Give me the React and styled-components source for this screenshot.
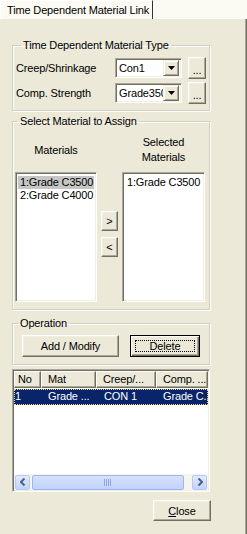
import React from 'react';
import styled, { createGlobalStyle } from 'styled-components';

const GlobalStyle = createGlobalStyle`
  html, body {
    margin: 0;
    padding: 0;
    background: #ece9d8;
  }
  body {
    font-family: "Liberation Sans", Arial, sans-serif;
    font-size: 11px;
    letter-spacing: -0.15px;
    color: #000;
  }
`;

const Window = styled.div`
  width: 247px;
  height: 534px;
  display: flex;
  flex-direction: column;
  overflow: hidden;
`;

const TabStrip = styled.div`
  display: flex;
  height: 19px;
  background: #fbfaf3;
`;

const Tab = styled.div`
  width: 153px;
  box-sizing: border-box;
  padding: 3px 0 0 6px;
  border-left: 1px solid #fff;
  border-top: 1px solid #fff;
  border-right: 1px solid #333;
  line-height: 13px;
  white-space: nowrap;
`;

const TabFiller = styled.div`
  flex: 1;
  border-bottom: 1px solid #fff;
`;

const Panel = styled.div`
  flex: 1;
  display: flex;
  flex-direction: column;
  padding: 0 0 0 12px;
  background: #ece9d8;
  box-shadow: inset -1px 0 #716f64, inset -2px 0 #aca899;
`;

const Group = styled.fieldset`
  width: 198px;
  box-sizing: border-box;
  margin: ${p => p.$top}px 0 0 0;
  padding: ${p => p.$pad};
  border: 1px solid #d0d0bf;
  box-shadow: inset 1px 1px #fff, 1px 1px #fff;
  min-inline-size: 0;
`;

const Legend = styled.legend`
  margin-left: 5px;
  padding: 0 2px;
  line-height: 13px;
`;

const FieldRow = styled.div`
  display: flex;
  align-items: center;
  height: 22px;
  & + & {
    margin-top: 3px;
  }
`;

const FieldLabel = styled.span`
  width: 99px;
`;

const Combo = styled.div`
  width: 67px;
  height: 20px;
  box-sizing: border-box;
  display: flex;
  align-items: center;
  background: #fff;
  border: 1px solid;
  border-color: #aca899 #fff #fff #aca899;
  box-shadow: inset 1px 1px #716f64, inset -1px -1px #f1efe2;
  padding: 2px 2px 2px 3px;
`;

const ComboText = styled.span`
  flex: 1;
  overflow: hidden;
  white-space: nowrap;
  line-height: 14px;
`;

const DropButton = styled.div`
  width: 16px;
  height: 16px;
  flex: none;
  box-sizing: border-box;
  display: flex;
  align-items: center;
  justify-content: center;
  background: #ece9d8;
  border: 1px solid;
  border-color: #f1efe2 #716f64 #716f64 #f1efe2;
  box-shadow: inset 1px 1px #fff, inset -1px -1px #aca899;
`;

const Raised = styled.button`
  font: inherit;
  letter-spacing: inherit;
  color: #000;
  padding: 0;
  background: #ece9d8;
  border: 1px solid;
  border-color: #fff #716f64 #716f64 #fff;
  box-shadow: inset -1px -1px #aca899, inset 1px 1px #f1efe2;
  width: ${p => p.$w}px;
  height: ${p => p.$h}px;
  display: flex;
  align-items: center;
  justify-content: center;
`;

const DotsButton = styled(Raised)`
  margin-left: 6px;
  align-items: flex-end;
  padding-bottom: 4px;
  line-height: 8px;
`;

const DefaultButton = styled(Raised)`
  border: 1px solid #000;
  box-shadow: inset 1px 1px #fff, inset -1px -1px #716f64, inset -2px -2px #aca899;
  margin-left: 11px;
`;

const FocusRect = styled.span`
  display: flex;
  align-items: center;
  justify-content: center;
  width: calc(100% - 8px);
  height: calc(100% - 8px);
  border: 1px dotted #000;
  box-sizing: border-box;
`;

const AssignGrid = styled.div`
  display: grid;
  grid-template-columns: 82px 25px 83px;
  grid-template-rows: 44px 130px;
  padding-left: 2px;
`;

const ColHeader = styled.div`
  display: flex;
  align-items: center;
  justify-content: center;
  text-align: center;
  line-height: 15px;
`;

const ListBox = styled.div`
  box-sizing: border-box;
  background: #fff;
  border: 1px solid;
  border-color: #aca899 #fff #fff #aca899;
  box-shadow: inset 1px 1px #716f64, inset -1px -1px #f1efe2;
  padding: 3px 2px;
`;

const ListItem = styled.div`
  line-height: 13px;
  padding-left: 2px;
  white-space: nowrap;
  background: ${p => (p.$selected ? '#c6c6c6' : 'transparent')};
`;

const MoveColumn = styled.div`
  grid-row: 2;
  grid-column: 2;
  display: flex;
  flex-direction: column;
  align-items: center;
  justify-content: center;
  gap: 6px;
  padding-bottom: 7px;
`;

const OperationRow = styled.div`
  display: flex;
  padding-left: 9px;
`;

const ListView = styled.div`
  margin-top: 4px;
  width: 198px;
  height: 123px;
  box-sizing: border-box;
  display: flex;
  flex-direction: column;
  background: #fff;
  border: 1px solid;
  border-color: #aca899 #fff #fff #aca899;
  box-shadow: inset 1px 1px #716f64, inset -1px -1px #f1efe2;
  padding: 1px;
`;

const HeaderRow = styled.div`
  display: flex;
  height: 17px;
`;

const HeaderCell = styled.div`
  width: ${p => p.$w}px;
  flex: none;
  box-sizing: border-box;
  padding-left: ${p => p.$pad}px;
  line-height: 15px;
  background: #ece9d8;
  border: 1px solid;
  border-color: #fff #716f64 #716f64 #fff;
  box-shadow: inset -1px -1px #aca899;
  white-space: nowrap;
  overflow: hidden;
`;

const DataRow = styled.div`
  display: flex;
  height: 16px;
  margin-top: 1px;
  background: #0a246a;
  color: #fff;
  outline: 1px dotted #e9d88c;
  outline-offset: -1px;
`;

const DataCell = styled.div`
  width: ${p => p.$w}px;
  flex: none;
  box-sizing: border-box;
  padding-left: ${p => p.$pad}px;
  line-height: 15px;
  white-space: nowrap;
  overflow: hidden;
`;

const ListSpacer = styled.div`
  flex: 1;
`;

const ScrollBar = styled.div`
  display: flex;
  align-items: center;
  height: 16px;
  background: #f6f6f1;
  padding: 0 1px;
`;

const ScrollArrow = styled.div`
  width: 15px;
  height: 15px;
  box-sizing: border-box;
  display: flex;
  align-items: center;
  justify-content: center;
  border: 1px solid #b6c9f6;
  border-radius: 2px;
  background: linear-gradient(#e1eafe, #c2d3fc);
`;

const Thumb = styled.div`
  flex: 1;
  height: 15px;
  margin: 0 ${p => p.$right}px 0 2px;
  box-sizing: border-box;
  display: flex;
  align-items: center;
  justify-content: center;
  border: 1px solid #9fb5f0;
  border-radius: 2px;
  background: linear-gradient(#d5e1fe, #c1d2fb);
`;

const Footer = styled.div`
  width: 199px;
  display: flex;
  justify-content: flex-end;
  margin-top: 8px;
`;

const Underline = styled.span`
  text-decoration: underline;
`;

const Triangle = () => (
  <svg width="7" height="4" viewBox="0 0 7 4">
    <path d="M0 0h7L3.5 4z" fill="#000" />
  </svg>
);

const Chevron = ({ dir }) => (
  <svg width="6" height="8" viewBox="0 0 6 8">
    <path
      d={dir === 'left' ? 'M4.5 0.5L1 4l3.5 3.5' : 'M1.5 0.5L5 4 1.5 7.5'}
      stroke="#4d6185"
      strokeWidth="2"
      fill="none"
    />
  </svg>
);

const Grip = () => (
  <svg width="8" height="7" viewBox="0 0 8 7">
    {[0, 2, 4, 6].map(x => (
      <rect key={x} x={x} y="0" width="1" height="7" fill="#8ea6e8" />
    ))}
  </svg>
);

const ComboBox = ({ value }) => (
  <Combo>
    <ComboText>{value}</ComboText>
    <DropButton>
      <Triangle />
    </DropButton>
  </Combo>
);

const columns = [
  { head: 'No', cell: '1', w: 27, hp: 3, cp: 1 },
  { head: 'Mat', cell: 'Grade ...', w: 55, hp: 6, cp: 7 },
  { head: 'Creep/...', cell: 'CON 1', w: 60, hp: 6, cp: 8 },
  { head: 'Comp. ...', cell: 'Grade C..', w: 52, hp: 6, cp: 7 },
];

export default function App() {
  return (
    <Window>
      <GlobalStyle />
      <TabStrip>
        <Tab>Time Dependent Material Link</Tab>
        <TabFiller />
      </TabStrip>
      <Panel>
        <Group $top={20} $pad="5px 0 6px 3px">
          <Legend>Time Dependent Material Type</Legend>
          <FieldRow>
            <FieldLabel>Creep/Shrinkage</FieldLabel>
            <ComboBox value="Con1" />
            <DotsButton $w={18} $h={22}>...</DotsButton>
          </FieldRow>
          <FieldRow>
            <FieldLabel>Comp. Strength</FieldLabel>
            <ComboBox value="Grade3500" />
            <DotsButton $w={18} $h={22}>...</DotsButton>
          </FieldRow>
        </Group>

        <Group $top={4} $pad="0 0 7px 0">
          <Legend>Select Material to Assign</Legend>
          <AssignGrid>
            <ColHeader>Materials</ColHeader>
            <div />
            <ColHeader>
              Selected
              <br />
              Materials
            </ColHeader>
            <ListBox>
              <ListItem $selected>1:Grade C3500</ListItem>
              <ListItem>2:Grade C4000</ListItem>
            </ListBox>
            <MoveColumn>
              <Raised $w={17} $h={20}>&gt;</Raised>
              <Raised $w={17} $h={20}>&lt;</Raised>
            </MoveColumn>
            <ListBox>
              <ListItem>1:Grade C3500</ListItem>
            </ListBox>
          </AssignGrid>
        </Group>

        <Group $top={7} $pad="5px 0 7px 0">
          <Legend>Operation</Legend>
          <OperationRow>
            <Raised $w={97} $h={22}>Add / Modify</Raised>
            <DefaultButton $w={70} $h={22}>
              <FocusRect>Delete</FocusRect>
            </DefaultButton>
          </OperationRow>
        </Group>

        <ListView>
          <HeaderRow>
            {columns.map(c => (
              <HeaderCell key={c.head} $w={c.w} $pad={c.hp}>
                {c.head}
              </HeaderCell>
            ))}
          </HeaderRow>
          <DataRow>
            {columns.map(c => (
              <DataCell key={c.head} $w={c.w} $pad={c.cp}>
                {c.cell}
              </DataCell>
            ))}
          </DataRow>
          <ListSpacer />
          <ScrollBar>
            <ScrollArrow>
              <Chevron dir="left" />
            </ScrollArrow>
            <Thumb $right={8}>
              <Grip />
            </Thumb>
            <ScrollArrow>
              <Chevron dir="right" />
            </ScrollArrow>
          </ScrollBar>
        </ListView>

        <Footer>
          <Raised $w={58} $h={21}>
            <span>
              <Underline>C</Underline>lose
            </span>
          </Raised>
        </Footer>
      </Panel>
    </Window>
  );
}
